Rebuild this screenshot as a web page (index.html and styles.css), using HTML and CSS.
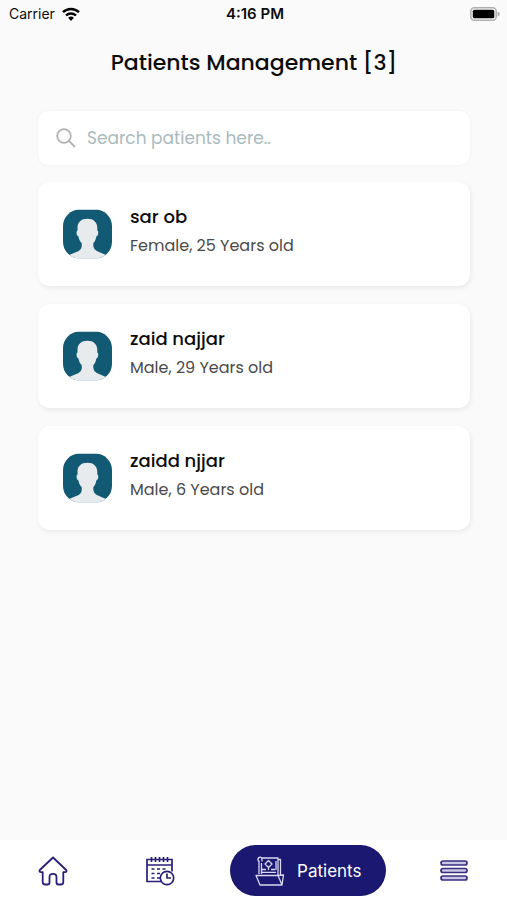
FILE: index.html
```html
<!DOCTYPE html>
<html lang="en">
<head>
<meta charset="utf-8">
<meta name="viewport" content="width=device-width, initial-scale=1">
<title>Patients Management</title>
<link rel="stylesheet" href="styles.css">
</head>
<body>
<svg class="defs" aria-hidden="true">
  <symbol id="avatar" viewBox="0 0 50 50">
    <clipPath id="avatar-clip"><rect width="50" height="50" rx="17"/></clipPath>
    <g clip-path="url(#avatar-clip)">
      <rect width="50" height="50" fill="#125a73"/>
      <path fill="#e7ebee" d="M25 9.500c-6.500 0-10.200 3.500-10.200 9v3c-1.500.3-1.300 5 1 6 .5 3 1.500 5 3.200 6.800.6 4-.2 6.500-3 8L5 47v4h40v-4l-10.500-4.700c-2.800-1.500-4-4-3.500-8 1.700-1.800 2.500-3.800 3-6.800 2.300-1 2.500-5.700 1-6v-3c0-5.500-4-9-10-9z"/>
    </g>
  </symbol>
</svg>
<div class="app">
  <div class="status">
    <div class="carrier">
      <span>Carrier</span>
      <svg width="18" height="14" viewBox="0 0 18 14" aria-hidden="true">
        <g fill="none" stroke="#000" stroke-width="2.400"><path d="M1 5.200a11.500 11.500 0 0 1 16 0"/><path d="M4 8.500a7.200 7.200 0 0 1 10 0"/></g>
        <path d="M9 14l-2.900-3.200a4.200 4.200 0 0 1 5.800 0z"/>
      </svg>
    </div>
    <strong class="time">4:16 PM</strong>
    <svg class="battery" width="31" height="14" viewBox="0 0 31 14" aria-hidden="true">
      <rect x=".8" y=".8" width="25.400" height="12.400" rx="3.500" fill="#fafafa" stroke="#b0b0b0" stroke-width="1.500"/>
      <rect x="2.800" y="2.800" width="21.500" height="8.400" rx="1.500"/>
      <path d="M27.500 4.500c3 1 3 4 0 5z" fill="#b0b0b0"/>
    </svg>
  </div>
  <main>
    <h1>Patients Management [3]</h1>
    <label class="search">
      <svg width="20" height="20" viewBox="0 0 20 20" fill="none" stroke="#b3b3b3" stroke-width="1.800" aria-hidden="true"><circle cx="8" cy="8" r="6.800"/><path d="M13 13l6 6"/></svg>
      <input type="search" placeholder="Search patients here.." aria-label="Search patients">
    </label>
    <ul class="patients">
      <li class="card">
        <svg class="avatar" aria-hidden="true"><use href="#avatar"/></svg>
        <div class="info"><h2>sar ob</h2><p>Female, 25 Years old</p></div>
      </li>
      <li class="card">
        <svg class="avatar" aria-hidden="true"><use href="#avatar"/></svg>
        <div class="info"><h2>zaid najjar</h2><p>Male, 29 Years old</p></div>
      </li>
      <li class="card">
        <svg class="avatar" aria-hidden="true"><use href="#avatar"/></svg>
        <div class="info"><h2>zaidd njjar</h2><p>Male, 6 Years old</p></div>
      </li>
    </ul>
  </main>
  <nav>
    <a href="#home" aria-label="Home">
      <svg width="30" height="30" viewBox="0 0 30 30" fill="none" stroke="#291f79" stroke-width="1.800" stroke-linejoin="round" aria-hidden="true"><path d="M15 1.500L1.800 14c-.8 1.100-.2 2.200 1.200 2.200h1.700V26c0 1.600.9 2.500 2.500 2.500h2.300c1.300 0 2-.7 2-2v-5.300c0-4.400 7-4.400 7 0v5.300c0 1.300.7 2 2 2h2.300c1.600 0 2.500-.9 2.500-2.500v-9.800H27c1.400 0 2-1.100 1.200-2.200z"/></svg>
    </a>
    <a href="#appointments" aria-label="Appointments">
      <svg width="30" height="30" viewBox="0 0 30 30" fill="none" stroke="#291f79" stroke-width="1.700" aria-hidden="true">
        <path d="M16 25.500H2V3.500h25v12M2 9h25"/>
        <path d="M6.500 1v5M10.500 1v5M14.500 1v5M18.500 1v5M22.500 1v5"/>
        <path stroke-dasharray="3 2.500" d="M6.500 13h15M6.500 17.500h9M6.500 22h9"/>
        <circle cx="22" cy="22" r="6.700" fill="#fff"/><path d="M22 17.500V22h4"/>
      </svg>
    </a>
    <a class="active" href="#patients" aria-current="page">
      <svg width="30" height="30" viewBox="0 0 30 30" fill="none" stroke="#d9d8f0" stroke-width="1.300" stroke-linejoin="round" aria-hidden="true">
        <path d="M1 19.500h22l4 9.500H5zM23 19.500l5.500-.5L27 29"/>
        <path d="M4 18V4.500M7 2h16v17M23 3.500h2.500V19M6.500 18V7M21 5v9M7 13.500h4M16 13.500h4M6.500 16.300H21"/>
        <path d="M13.500 4.500L17 8l-3.500 3.500L10 8zM13.500 11.500V14"/><path d="M3.500 5.500c-2-4 3-6 3.500-2.500v2.500"/>
      </svg>
      <span>Patients</span>
    </a>
    <a href="#menu" aria-label="Menu">
      <svg width="30" height="30" viewBox="0 0 30 30" fill="#cac7e5" stroke="#392e82" stroke-width="1.700" aria-hidden="true"><rect x="2" y="5" width="26" height="4" rx="2"/><rect x="2" y="12.500" width="26" height="4" rx="2"/><rect x="2" y="20" width="26" height="4" rx="2"/></svg>
    </a>
  </nav>
</div>
</body>
</html>
```
FILE: styles.css
```css
* { box-sizing: border-box; }
body {
  margin: 0;
  background: #fafafa;
  color: #0c0c0c;
  font-family: Poppins, Inter, "Liberation Sans", sans-serif;
}
.defs { position: absolute; width: 0; height: 0; }
svg { flex: none; }
.app { display: flex; flex-direction: column; min-height: 100vh; }
.status {
  display: grid;
  grid-template-columns: 1fr auto 1fr;
  align-items: center;
  height: 27px;
  padding: 0 6px 0 9px;
  font-family: Inter, sans-serif;
  font-size: 14px;
}
.carrier { display: flex; align-items: center; gap: 7px; }
.time { font-size: 15px; font-weight: 600; }
.battery { justify-self: end; }
main { flex: 1; padding: 18px 37px 24px 38px; }
h1 {
  margin: 0 0 30px;
  text-align: center;
  font-size: 22px;
  line-height: 36px;
  font-weight: 500;
}
.search {
  display: flex;
  align-items: center;
  gap: 11px;
  height: 54px;
  padding: 0 18px;
  border-radius: 10px;
  background: #fff;
  box-shadow: 0 0 3px rgba(0, 0, 0, .06);
}
.search input {
  flex: 1;
  min-width: 0;
  padding: 0;
  border: 0;
  outline: 0;
  background: none;
  font: inherit;
  font-size: 17px;
}
.search input::placeholder { color: #a9babd; opacity: 1; }
.patients {
  display: grid;
  gap: 18px;
  margin: 17px 0 0;
  padding: 0;
  list-style: none;
}
.card {
  display: flex;
  align-items: center;
  gap: 18px;
  min-height: 104px;
  padding: 0 25px;
  border-radius: 12px;
  background: #fff;
  box-shadow: 1px 2px 5px rgba(0, 0, 0, .07);
}
.avatar { width: 49px; height: 50px; }
.info { padding-bottom: 6px; }
h2 { margin: 0; font-size: 18px; line-height: 30px; font-weight: 500; }
.card p { margin: 0; font-size: 16px; line-height: 28px; color: #4a4a4a; }
nav {
  display: flex;
  align-items: center;
  height: 60px;
  padding-top: 1px;
  background: #fff;
}
nav a {
  display: flex;
  flex: 1;
  justify-content: center;
  color: #fff;
  text-decoration: none;
}
nav .active {
  flex: none;
  align-items: center;
  gap: 12px;
  height: 51px;
  margin: 0 14px 0 17px;
  padding: 0 25px;
  border-radius: 26px;
  background: #1b1871;
  font-family: Inter, sans-serif;
  font-size: 17px;
}
```
